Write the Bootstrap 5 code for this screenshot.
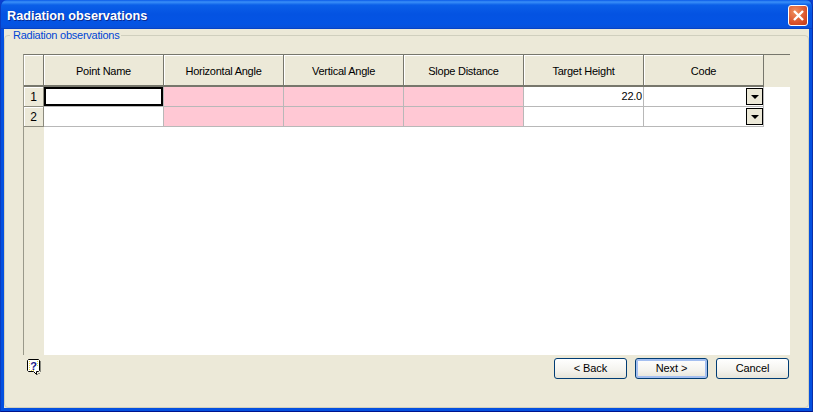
<!DOCTYPE html>
<html lang="en">
<head>
<meta charset="utf-8">
<title>Radiation observations</title>
<link href="https://cdn.jsdelivr.net/npm/bootstrap@5.3.0/dist/css/bootstrap.min.css" rel="stylesheet">
<style>
html,body{margin:0;height:412px;overflow:hidden;background:#0a3fd0}
body{font-family:"Liberation Sans",Arial,sans-serif;font-size:11px;letter-spacing:-.25px;color:#000;line-height:1}
.xp-win{width:813px;height:412px;background:#0450e0;padding:0 3px 3px;border-right:1px solid #0a2fa8;border-left:1px solid #0a3cc0;border-bottom:1px solid #00138c;border-radius:7px 7px 0 0;overflow:hidden}
.xp-title{height:29px;margin:0 -3px;padding:2px 4px 0 6px;background:linear-gradient(180deg,#0a5ae8 0,#3a90f8 2px,#0a5fe8 5px,#0453e2 14px,#0454e4 24px,#0a50d8 28px,#0036b8 29px)}
.xp-title-text{padding-top:2px;font-weight:700;font-size:12.7px;letter-spacing:0;color:#fff;text-shadow:1px 1px 0 #0a2a90}
.xp-close{width:20px;height:21px;padding:0;border:1px solid #fff;border-radius:3px;background:radial-gradient(circle at 35% 30%,#f0905f,#d8502a 65%,#c03a18);line-height:0}
.xp-client{height:379px;background:#ece9d8}
.xp-group{margin:0;height:379px;border:1px solid #d0cfbe;border-radius:4px;padding:0 18px 0 18px;min-width:0}
.xp-legend{float:none;width:auto;margin:0 0 0 -13px;padding:0 2px 0 3px;font-size:11px;line-height:13px;color:#0046d5}
.obs-grid{width:767px;height:301px;margin-top:12px;table-layout:fixed;border-collapse:separate;border-spacing:0;border-top:1px solid #77776c;border-left:1px solid #9a998a;background:#fff}
.obs-grid th,.obs-grid td{padding:0;font-weight:400;overflow:hidden}
.obs-grid thead th{height:32px;padding-top:2px;background:#ece9d8;text-align:center;border-right:1px solid #77776c;border-bottom:2px solid #77776c;box-shadow:inset 1px 1px 0 #fff}
.obs-grid thead th.grid-band{border:0;box-shadow:none}
.obs-grid tbody th{background:#ece9d8;text-align:center;width:20px;height:20px;font-size:12px;border-right:1px solid #8c8b7e;border-bottom:1px solid #8c8b7e;box-shadow:inset 1px 1px 0 #fff}
.obs-grid tbody th.grid-rail{background:#ece9d8;border:0;box-shadow:none;height:228px}
.obs-grid tbody td{height:20px;border-right:1px solid #b8b8b8;border-bottom:1px solid #b8b8b8;background:#fff;position:relative}
.obs-grid tbody td.grid-req{background:#ffc8d4}
.obs-grid tbody td.grid-num{text-align:right;padding-right:1px}
.obs-grid tbody td.grid-cur{box-shadow:inset 0 0 0 2px #000}
.obs-grid tbody td.grid-end,.obs-grid tbody td.grid-fill{border:0}
.obs-grid tbody td.grid-fill{height:228px}
.grid-drop{position:absolute;right:0;top:1px;width:17px;height:17px;border:1px solid #000;background:#ece9d8;display:flex;align-items:center;justify-content:center}
.grid-drop::after{content:"";border-style:solid;border-width:4px 4px 0;border-color:#000 transparent transparent}
.xp-foot{height:30px;padding:3px 1px 0 0}
.xp-help{margin:1px 0 0 4px}
.xp-btn{width:73px;height:21px;padding:0;font-size:11px;letter-spacing:-.1px;line-height:1;color:#000;border:1px solid #003c74;border-radius:3px;background:linear-gradient(180deg,#fff,#f4f3ee 60%,#e6e4d8)}
.xp-btn-def{box-shadow:inset 0 0 0 2px #a4bff0}
</style>
</head>
<body>
<div class="xp-win d-flex flex-column">
  <div class="xp-title d-flex align-items-center justify-content-between">
    <span class="xp-title-text">Radiation observations</span>
    <button type="button" class="xp-close d-flex align-items-center justify-content-center" aria-label="Close">
      <svg width="13" height="13" viewBox="0 0 13 13"><path d="M2 2l9 9M11 2l-9 9" stroke="#fff" stroke-width="2.4" fill="none"/></svg>
    </button>
  </div>
  <div class="xp-client">
    <fieldset class="xp-group">
      <legend class="xp-legend">Radiation observations</legend>
      <table class="obs-grid">
        <colgroup>
          <col style="width:20px"><col style="width:120px"><col style="width:120px"><col style="width:120px"><col style="width:120px"><col style="width:120px"><col style="width:120px"><col>
        </colgroup>
        <thead>
          <tr><th></th><th>Point Name</th><th>Horizontal Angle</th><th>Vertical Angle</th><th>Slope Distance</th><th>Target Height</th><th>Code</th><th class="grid-band"></th></tr>
        </thead>
        <tbody>
          <tr><th>1</th><td class="grid-cur"></td><td class="grid-req"></td><td class="grid-req"></td><td class="grid-req"></td><td class="grid-num">22.0</td><td><span class="grid-drop"></span></td><td class="grid-end"></td></tr>
          <tr><th>2</th><td></td><td class="grid-req"></td><td class="grid-req"></td><td class="grid-req"></td><td></td><td><span class="grid-drop"></span></td><td class="grid-end"></td></tr>
          <tr><th class="grid-rail"></th><td class="grid-fill" colspan="7"></td></tr>
        </tbody>
      </table>
      <div class="xp-foot d-flex justify-content-between align-items-start">
        <svg class="xp-help" width="15" height="17" viewBox="0 0 15 17">
          <path d="M1.500.5h10l1 1v10l-1 1h-2v3l-3-3h-5l-1-1v-10z" fill="#fff" stroke="#000"/>
          <path d="M2 2.500h1M2 4.500h1M2 6.500h1M2 8.500h1M2 10.500h1M4 11.500h1M6 11.500h1M10 2.500h1M10 4.500h1M10 6.500h1" stroke="#e8d840"/>
          <path d="M13.500 2v11M11 14.500h2M10.500 16v-1" stroke="#8a8a80"/>
          <text x="6.500" y="10.500" text-anchor="middle" font-family="Liberation Sans" font-weight="700" font-size="11" fill="#14148c">?</text>
        </svg>
        <div class="d-flex gap-2">
          <button type="button" class="xp-btn">&lt; Back</button>
          <button type="button" class="xp-btn xp-btn-def">Next &gt;</button>
          <button type="button" class="xp-btn">Cancel</button>
        </div>
      </div>
    </fieldset>
  </div>
</div>
</body>
</html>
